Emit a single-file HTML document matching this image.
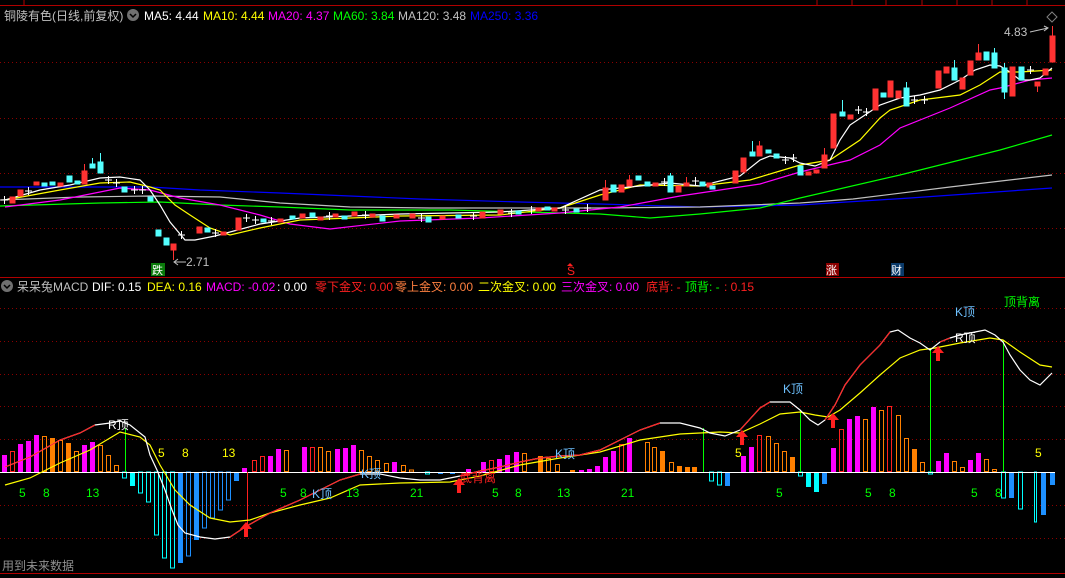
<!DOCTYPE html>
<html><head><meta charset="utf-8"><style>
html,body{margin:0;padding:0;background:#000;}
body{width:1065px;height:578px;overflow:hidden;position:relative;font-family:"Liberation Sans","Noto Sans CJK SC",sans-serif;}
svg{position:absolute;left:0;top:0;}
text{font-family:"Liberation Sans","Noto Sans CJK SC",sans-serif;}
</style></head><body>
<svg width="1065" height="578" viewBox="0 0 1065 578" xmlns="http://www.w3.org/2000/svg">
<!-- top bar -->
<line x1="0" y1="5.5" x2="1065" y2="5.5" stroke="#b00000"/>
<g stroke="#b00000"><line x1="24" y1="0" x2="24" y2="5"/><line x1="817" y1="0" x2="817" y2="5"/><line x1="852" y1="0" x2="852" y2="5"/><line x1="886" y1="0" x2="886" y2="5"/><line x1="922" y1="0" x2="922" y2="5"/><line x1="957" y1="0" x2="957" y2="5"/><line x1="992" y1="0" x2="992" y2="5"/><line x1="1027" y1="0" x2="1027" y2="5"/></g>
<!-- header -->
<g font-size="12">
<text x="4" y="20" fill="#c0c0c0">铜陵有色(日线,前复权)</text>
<circle cx="133" cy="15" r="6" fill="#707070"/><path d="M130 14 L133 17 L136 14" stroke="#000" stroke-width="1.5" fill="none"/>
<text x="144" y="20" fill="#ffffff">MA5: 4.44</text>
<text x="203" y="20" fill="#ffff00">MA10: 4.44</text>
<text x="268" y="20" fill="#ff00ff">MA20: 4.37</text>
<text x="333" y="20" fill="#00ff00">MA60: 3.84</text>
<text x="398" y="20" fill="#c0c0c0">MA120: 3.48</text>
<text x="470" y="20" fill="#0000ff">MA250: 3.36</text>
</g>
<!-- main grid -->
<g stroke="#8b0000" stroke-dasharray="1,3"><line x1="0" y1="62.5" x2="1065" y2="62.5"/><line x1="0" y1="118.5" x2="1065" y2="118.5"/><line x1="0" y1="173.5" x2="1065" y2="173.5"/><line x1="0" y1="228.5" x2="1065" y2="228.5"/></g>
<line x1="0" y1="277.5" x2="1065" y2="277.5" stroke="#b00000"/>
<!-- MA lines -->
<g fill="none" stroke-width="1.2">
<polyline stroke="#0000ff" points="0,187 150,187 200,190 280,193 350,196 420,199 520,202 600,204 700,207 800,205 910,198 1052,188"/>
<polyline stroke="#c0c0c0" points="0,200 80,197 150,196 220,197 280,203 350,207 430,208 600,208 700,207 800,203 853,199 950,187 1052,175"/>
<polyline stroke="#00ff00" points="0,206 100,203 160,202 220,205 280,207 350,210 450,210 600,214 650,218 700,214 760,208 800,198 900,175 960,160 1000,150 1052,135"/>
<polyline stroke="#ff00ff" points="5,207 60,200 120,188 150,190 180,198 220,205 260,215 290,224 330,229 400,221 480,218 560,213 620,207 680,196 720,190 760,184 800,172 850,160 880,145 900,128 950,108 990,90 1000,88 1030,80 1052,78"/>
<polyline stroke="#ffff00" points="5,200 60,190 100,183 130,182 150,187 160,190 175,205 190,215 210,228 230,235 260,228 300,220 400,216 500,215 560,208 600,195 640,185 700,186 750,180 790,168 800,165 830,160 860,140 880,118 890,110 920,100 960,95 980,85 1000,72 1020,72 1052,70"/>
<polyline stroke="#ffffff" points="5,200 40,190 70,185 100,178 120,177 140,180 150,190 160,205 170,222 185,240 195,240 215,236 230,232 260,224 300,218 400,214 500,212 560,208 600,190 640,186 670,183 700,186 740,176 760,160 770,156 790,158 800,163 815,166 830,160 840,140 850,125 865,115 880,105 900,98 920,95 940,90 960,80 975,70 990,65 1000,66 1010,72 1020,80 1030,80 1040,78 1052,68"/>
</g>
<!-- candles -->
<g id="candles">
<!-- red solid -->
<g fill="#ff3232" stroke="#ff3232">
<rect x="10" y="197" width="5" height="6"/><rect x="18" y="190" width="5" height="6"/><rect x="34" y="182" width="5" height="3"/><rect x="58" y="183" width="5" height="3"/>
<rect x="82" y="171" width="5" height="13"/><line x1="84.5" y1="164" x2="84.5" y2="171"/>
<rect x="171" y="244" width="5" height="6"/><line x1="173.5" y1="250" x2="173.5" y2="260"/>
<rect x="197" y="227" width="5" height="6"/><rect x="221" y="232" width="5" height="3"/><rect x="236" y="218" width="5" height="12"/><rect x="278" y="219" width="5" height="3"/>
<rect x="300" y="214" width="5" height="4"/><rect x="318" y="217" width="5" height="3"/><rect x="333" y="214" width="5" height="3"/><rect x="352" y="212" width="5" height="4"/><rect x="370" y="214" width="5" height="3"/><rect x="394" y="215" width="5" height="3"/><rect x="410" y="214" width="5" height="4"/><rect x="440" y="216" width="5" height="3"/><rect x="480" y="212" width="5" height="6"/><rect x="498" y="210" width="5" height="4"/><rect x="536" y="208" width="5" height="3"/><rect x="552" y="208" width="5" height="3"/>
<rect x="603" y="188" width="5" height="12"/><line x1="605.5" y1="180" x2="605.5" y2="188"/>
<rect x="619" y="185" width="5" height="7"/><rect x="627" y="180" width="5" height="6"/><line x1="629.5" y1="175" x2="629.5" y2="180"/>
<rect x="653" y="183" width="5" height="3"/><rect x="676" y="186" width="5" height="6"/><rect x="684" y="183" width="5" height="3"/><line x1="686.5" y1="177" x2="686.5" y2="183"/>
<rect x="707" y="183" width="5" height="4"/><rect x="733" y="171" width="5" height="12"/><rect x="741" y="158" width="5" height="14"/><rect x="757" y="146" width="5" height="10"/><line x1="759.5" y1="141" x2="759.5" y2="146"/>
<rect x="806" y="172" width="5" height="3"/><rect x="814" y="170" width="5" height="3"/><rect x="822" y="155" width="5" height="13"/><line x1="824.5" y1="148" x2="824.5" y2="155"/>
<rect x="831" y="114" width="5" height="34"/><rect x="848" y="115" width="5" height="4"/><rect x="873" y="89" width="5" height="21"/><rect x="888" y="81" width="5" height="16"/><rect x="896" y="91" width="5" height="7"/>
<rect x="936" y="71" width="5" height="17"/><rect x="944" y="67" width="5" height="6"/><rect x="960" y="78" width="5" height="11"/><rect x="968" y="61" width="5" height="14"/><rect x="976" y="53" width="5" height="7"/><line x1="978.5" y1="44" x2="978.5" y2="53"/>
<rect x="1010" y="67" width="5" height="29"/><rect x="1035" y="82" width="5" height="4"/><line x1="1037.5" y1="86" x2="1037.5" y2="92"/><rect x="1043" y="69" width="5" height="6"/>
<rect x="1050" y="36" width="5" height="26"/><line x1="1052.5" y1="26" x2="1052.5" y2="36"/>
</g>
<!-- cyan solid -->
<g fill="#54ffff" stroke="#54ffff">
<rect x="42" y="183" width="5" height="3"/><rect x="50" y="182" width="5" height="3"/><rect x="67" y="176" width="5" height="6"/><rect x="75" y="181" width="5" height="3"/>
<rect x="90" y="164" width="5" height="4"/><line x1="92.5" y1="158" x2="92.5" y2="164"/><rect x="98" y="162" width="5" height="11"/><line x1="100.5" y1="153" x2="100.5" y2="162"/>
<rect x="122" y="187" width="5" height="5"/><rect x="148" y="197" width="5" height="4"/><rect x="156" y="230" width="5" height="6"/><rect x="164" y="238" width="5" height="7"/><rect x="205" y="228" width="5" height="4"/><rect x="261" y="219" width="5" height="3"/>
<rect x="290" y="216" width="5" height="3"/><rect x="310" y="213" width="5" height="4"/><rect x="342" y="216" width="5" height="3"/><rect x="380" y="216" width="5" height="5"/><rect x="426" y="217" width="5" height="5"/><rect x="456" y="215" width="5" height="3"/><rect x="516" y="211" width="5" height="3"/><rect x="545" y="207" width="5" height="3"/><rect x="574" y="209" width="5" height="3"/>
<rect x="611" y="185" width="5" height="7"/><rect x="636" y="176" width="5" height="4"/><rect x="645" y="182" width="5" height="4"/><rect x="668" y="176" width="5" height="16"/><line x1="670.5" y1="173" x2="670.5" y2="176"/>
<rect x="700" y="182" width="5" height="4"/><rect x="710" y="186" width="5" height="3"/><rect x="750" y="152" width="5" height="4"/><line x1="752.5" y1="141" x2="752.5" y2="152"/><rect x="766" y="150" width="5" height="3"/><rect x="774" y="154" width="5" height="4"/><rect x="798" y="166" width="5" height="9"/>
<rect x="840" y="112" width="5" height="4"/><line x1="842.5" y1="100" x2="842.5" y2="112"/><rect x="881" y="93" width="5" height="4"/><rect x="904" y="88" width="5" height="18"/><line x1="906.5" y1="82" x2="906.5" y2="88"/>
<rect x="952" y="68" width="5" height="12"/><line x1="954.5" y1="60" x2="954.5" y2="68"/><rect x="984" y="52" width="5" height="8"/><rect x="992" y="53" width="5" height="15"/><line x1="994.5" y1="48" x2="994.5" y2="53"/>
<rect x="1002" y="68" width="5" height="24"/><line x1="1004.5" y1="63" x2="1004.5" y2="68"/><line x1="1004.5" y1="92" x2="1004.5" y2="99"/><rect x="1019" y="67" width="5" height="13"/>
</g>
<!-- crosses -->
<g stroke="#ffffff" stroke-width="1">
<path d="M1 200h7M4.5 196v8M25 191h7M28.5 187v8M105 180h7M108.5 176v8M113 183h7M116.5 179v8M131 190h7M134.5 186v8M139 190h7M142.5 186v8M178 235h7M181.5 231v8M212 233h7M215.5 229v8M243 218h7M246.5 214v8M252 220h7M255.5 216v8M268 221h7M271.5 217v8M855 110h7M858.5 106v8M863 112h7M866.5 108v8M911 100h7M914.5 96v8M921 100h7M924.5 96v8M1027 70h7M1030.5 66v8M661 182h7M664.5 178v8M692 181h7M695.5 177v8M782 160h7M785.5 156v8M790 158h7M793.5 154v8M326 216h7M329.5 212v8M362 215h7M365.5 211v8M418 218h7M421.5 214v8M470 216h7M473.5 212v8M508 213h7M511.5 209v8M528 210h7M531.5 206v8M562 210h7M565.5 206v8M584 208h7M587.5 204v8"/>
</g>
</g>
<!-- main labels -->
<g font-size="12">
<text x="1004" y="36" fill="#c0c0c0">4.83</text>
<path d="M1030 32 L1048 28 M1044 26 L1048 28 L1044 31" stroke="#c0c0c0" fill="none"/>
<path d="M1052 12 l5 5 -5 5 -5 -5z" stroke="#808080" fill="none"/>
<text x="186" y="266" fill="#c0c0c0">2.71</text>
<path d="M174 262 H186 M178 259 L174 262 L178 265" stroke="#c0c0c0" fill="none"/>
<rect x="151" y="263" width="14" height="13" fill="#0a7a0a"/><text x="152" y="274" fill="#ffffff" font-size="11">跌</text>
<text x="567" y="275" fill="#ff2020" font-size="12">S</text><path d="M567 266 l3 -3 3 3" fill="#ff2020"/>
<rect x="826" y="263" width="13" height="13" fill="#8b0000"/><text x="826" y="274" fill="#ffffff" font-size="11">涨</text>
<rect x="891" y="263" width="13" height="13" fill="#0a3a6a"/><text x="891" y="274" fill="#ffffff" font-size="11">财</text>
</g>
<!-- MACD header -->
<g font-size="12">
<circle cx="7" cy="286" r="6" fill="#707070"/><path d="M4 285 L7 288 L10 285" stroke="#000" stroke-width="1.5" fill="none"/>
<text x="17" y="291" fill="#c0c0c0">呆呆兔MACD</text>
<text x="92" y="291" fill="#ffffff">DIF: 0.15</text>
<text x="147" y="291" fill="#ffff00">DEA: 0.16</text>
<text x="206" y="291" fill="#ff00ff">MACD: -0.02</text>
<text x="277" y="291" fill="#ffffff">: 0.00</text>
<text x="315" y="291" fill="#ff2020">零下金叉: 0.00</text>
<text x="395" y="291" fill="#ff8040">零上金叉: 0.00</text>
<text x="478" y="291" fill="#ffff00">二次金叉: 0.00</text>
<text x="561" y="291" fill="#ff00ff">三次金叉: 0.00</text>
<text x="646" y="291" fill="#ff2020">底背: -</text>
<text x="685" y="291" fill="#00ff00">顶背: -</text>
<text x="724" y="291" fill="#ff2020">: 0.15</text>
</g>
<!-- MACD grid -->
<g stroke="#8b0000" stroke-dasharray="1,3"><line x1="0" y1="308.5" x2="1065" y2="308.5"/><line x1="0" y1="341.5" x2="1065" y2="341.5"/><line x1="0" y1="374.5" x2="1065" y2="374.5"/><line x1="0" y1="406.5" x2="1065" y2="406.5"/><line x1="0" y1="439.5" x2="1065" y2="439.5"/><line x1="0" y1="505.5" x2="1065" y2="505.5"/><line x1="0" y1="538.5" x2="1065" y2="538.5"/></g>
<!-- MACD bars -->
<g>
<g fill="#ff00ff">
<rect x="2" y="455" width="5" height="17"/><rect x="18" y="444" width="5" height="28"/><rect x="26" y="441" width="5" height="31"/><rect x="34" y="435" width="5" height="37"/><rect x="82" y="445" width="5" height="27"/><rect x="90" y="442" width="5" height="30"/><rect x="242" y="468" width="5" height="4"/><rect x="268" y="456" width="5" height="16"/><rect x="276" y="449" width="5" height="23"/>
<rect x="302" y="447" width="5" height="25"/><rect x="335" y="449" width="5" height="23"/><rect x="343" y="448" width="5" height="24"/><rect x="351" y="445" width="5" height="27"/><rect x="392" y="462" width="5" height="10"/><rect x="466" y="469" width="5" height="3"/>
<rect x="481" y="462" width="5" height="10"/><rect x="497" y="459" width="5" height="13"/><rect x="505" y="455" width="5" height="17"/><rect x="514" y="452" width="5" height="20"/><rect x="579" y="470" width="5" height="2"/><rect x="587" y="469" width="5" height="3"/><rect x="595" y="466" width="5" height="6"/><rect x="603" y="457" width="5" height="15"/><rect x="611" y="451" width="5" height="21"/><rect x="627" y="438" width="5" height="34"/>
<rect x="741" y="456" width="5" height="16"/><rect x="749" y="447" width="5" height="25"/><rect x="831" y="448" width="5" height="24"/><rect x="847" y="419" width="5" height="53"/><rect x="855" y="416" width="5" height="56"/><rect x="871" y="407" width="5" height="65"/><rect x="936" y="461" width="5" height="11"/><rect x="944" y="453" width="5" height="19"/><rect x="968" y="460" width="5" height="12"/><rect x="976" y="453" width="5" height="19"/>
</g>
<g fill="#ff8000">
<rect x="50" y="438" width="5" height="34"/><rect x="66" y="443" width="5" height="29"/><rect x="538" y="456" width="5" height="16"/><rect x="660" y="451" width="5" height="21"/><rect x="677" y="466" width="5" height="6"/><rect x="685" y="467" width="5" height="5"/><rect x="692" y="467" width="5" height="5"/><rect x="790" y="457" width="5" height="15"/><rect x="912" y="449" width="5" height="23"/><rect x="570" y="470" width="5" height="2"/>
</g>
<g fill="none" stroke="#ff8000">
<rect x="42.5" y="436.5" width="4" height="35"/><rect x="58.5" y="440.5" width="4" height="31"/><rect x="74.5" y="451.5" width="4" height="20"/><rect x="98.5" y="445.5" width="4" height="26"/><rect x="106.5" y="455.5" width="4" height="16"/><rect x="114.5" y="465.5" width="4" height="6"/>
<rect x="284.5" y="450.5" width="4" height="21"/><rect x="318.5" y="447.5" width="4" height="24"/><rect x="326.5" y="451.5" width="4" height="20"/><rect x="359.5" y="450.5" width="4" height="21"/><rect x="367.5" y="456.5" width="4" height="15"/><rect x="375.5" y="460.5" width="4" height="11"/><rect x="384.5" y="463.5" width="4" height="8"/><rect x="401.5" y="465.5" width="4" height="6"/><rect x="409.5" y="470" width="4" height="2"/>
<rect x="522.5" y="453.5" width="4" height="18"/><rect x="546.5" y="458.5" width="4" height="13"/><rect x="555.5" y="464.5" width="4" height="7"/><rect x="645.5" y="442.5" width="4" height="29"/><rect x="652.5" y="447.5" width="4" height="24"/><rect x="669.5" y="462.5" width="4" height="9"/>
<rect x="766.5" y="436.5" width="4" height="35"/><rect x="774.5" y="443.5" width="4" height="28"/><rect x="782.5" y="451.5" width="4" height="20"/><rect x="863.5" y="419.5" width="4" height="52"/><rect x="879.5" y="410.5" width="4" height="61"/><rect x="896.5" y="415.5" width="4" height="56"/><rect x="904.5" y="438.5" width="4" height="33"/><rect x="920.5" y="462.5" width="4" height="9"/><rect x="952.5" y="461.5" width="4" height="10"/><rect x="960.5" y="467.5" width="4" height="4"/><rect x="984.5" y="459.5" width="4" height="12"/><rect x="992.5" y="469.5" width="4" height="2"/>
</g>
<g fill="none" stroke="#ff2020">
<rect x="10.5" y="451.5" width="4" height="20"/><rect x="252.5" y="460.5" width="4" height="11"/><rect x="260.5" y="456.5" width="4" height="15"/><rect x="310.5" y="447.5" width="4" height="24"/><rect x="489.5" y="460.5" width="4" height="11"/><rect x="619.5" y="444.5" width="4" height="27"/><rect x="757.5" y="435.5" width="4" height="36"/><rect x="839.5" y="429.5" width="4" height="42"/><rect x="887.5" y="406.5" width="4" height="65"/>
</g>
<g fill="none" stroke="#00ffff">
<rect x="122.5" y="472" width="4" height="6"/><rect x="138.5" y="472" width="4" height="21"/><rect x="146.5" y="472" width="4" height="30"/><rect x="154.5" y="472" width="4" height="63"/><rect x="162.5" y="472" width="4" height="86"/><rect x="170.5" y="472" width="4" height="96"/><rect x="425.5" y="472" width="4" height="2"/>
<rect x="709.5" y="472" width="4" height="9"/><rect x="717.5" y="472" width="4" height="13"/><rect x="798.5" y="472" width="4" height="4"/><rect x="928.5" y="472" width="4" height="2"/><rect x="1001.5" y="472" width="4" height="26"/><rect x="1018.5" y="472" width="4" height="37"/><rect x="1034.5" y="472" width="2" height="50"/>
</g>
<g fill="#00ffff"><rect x="130" y="472" width="5" height="14"/><rect x="806" y="472" width="5" height="15"/><rect x="814" y="472" width="5" height="20"/></g>
<g fill="#1e90ff"><rect x="178" y="472" width="5" height="91"/><rect x="194" y="472" width="5" height="68"/><rect x="234" y="472" width="5" height="9"/><rect x="725" y="472" width="5" height="14"/><rect x="733" y="472" width="5" height="1"/><rect x="822" y="472" width="5" height="12"/><rect x="1009" y="472" width="5" height="26"/><rect x="1041" y="472" width="5" height="43"/><rect x="1050" y="472" width="5" height="13"/><rect x="438" y="472" width="5" height="2"/><rect x="450" y="472" width="5" height="2"/></g>
<g fill="none" stroke="#1e90ff"><rect x="186.5" y="472" width="4" height="84"/><rect x="202.5" y="472" width="4" height="56"/><rect x="210.5" y="472" width="4" height="46"/><rect x="218.5" y="472" width="4" height="38"/><rect x="226.5" y="472" width="4" height="28"/></g>
</g>
<!-- zero line & verticals -->
<line x1="0" y1="472.5" x2="1055" y2="472.5" stroke="#ffffff"/>
<g stroke="#00ff00"><line x1="125.5" y1="428" x2="125.5" y2="472"/><line x1="703.5" y1="428" x2="703.5" y2="472"/><line x1="800.5" y1="411" x2="800.5" y2="472"/><line x1="930.5" y1="349" x2="930.5" y2="472"/><line x1="1003.5" y1="340" x2="1003.5" y2="472"/></g>
<line x1="247.5" y1="472" x2="247.5" y2="528" stroke="#ff2020"/>
<!-- DIF / DEA -->
<polyline fill="none" stroke="#ffff00" stroke-width="1.2" points="5,485 30,478 60,463 90,450 110,438 120,432 140,437 150,445 160,465 175,490 190,505 210,518 230,522 250,520 270,513 300,505 330,498 360,485 400,483 450,482 480,476 520,465 560,458 600,452 640,440 680,434 720,432 740,433 760,424 780,414 800,412 815,415 828,417 840,410 860,393 880,375 900,358 920,350 935,348 960,343 990,338 1003,340 1020,352 1040,365 1052,367"/>
<polyline fill="none" stroke="#ffffff" stroke-width="1.2" points="5,467 30,457 60,440 80,433 95,425 110,423 120,421 130,425 145,437 150,455 157,470 165,490 172,510 178,525 185,533 200,537 215,539 230,537 245,527 270,513 300,500 320,490 340,480 360,474 380,474 400,478 420,480 440,480 460,476 480,471 500,467 520,462 540,458 560,456 580,455 600,450 620,440 640,430 660,423 680,423 700,428 710,433 725,436 740,430 760,408 770,402 790,402 800,410 810,420 818,425 825,420 835,405 845,385 860,365 870,355 880,345 890,332 898,330 910,338 920,343 930,350 940,342 950,338 960,335 975,332 985,330 995,335 1003,342 1010,355 1020,370 1030,380 1040,385 1052,373"/>
<g fill="none" stroke="#ff2020" stroke-width="1.2">
<polyline points="5,467 30,457 60,440 80,433 95,425"/>
<polyline points="230,537 245,527 270,513 300,500 320,490 340,480 360,474"/>
<polyline points="460,476 480,471 500,467 520,462 540,458 560,456 580,455 600,450 620,440 640,430 660,423"/>
<polyline points="740,430 760,408 770,402"/>
<polyline points="825,420 835,405 845,385 860,365 870,355 880,345 890,332"/>
<polyline points="940,342 950,338"/>
</g>
<!-- arrows -->
<g fill="#ff2020">
<path d="M246 522 l-6 7 h4 v8 h4 v-8 h4z"/><path d="M459 478 l-6 7 h4 v8 h4 v-8 h4z"/><path d="M742 430 l-6 7 h4 v8 h4 v-8 h4z"/><path d="M833 413 l-6 7 h4 v8 h4 v-8 h4z"/><path d="M938 346 l-6 7 h4 v8 h4 v-8 h4z"/>
</g>
<!-- MACD labels -->
<g font-size="12">
<text x="108" y="429" fill="#ffffff">R顶</text>
<text x="158" y="457" fill="#ffff00">5</text><text x="182" y="457" fill="#ffff00">8</text><text x="222" y="457" fill="#ffff00">13</text>
<text x="735" y="457" fill="#ffff00">5</text><text x="1035" y="457" fill="#ffff00">5</text>
<g fill="#00ff00">
<text x="19" y="497">5</text><text x="43" y="497">8</text><text x="86" y="497">13</text><text x="280" y="497">5</text><text x="300" y="497">8</text><text x="346" y="497">13</text><text x="410" y="497">21</text><text x="492" y="497">5</text><text x="515" y="497">8</text><text x="557" y="497">13</text><text x="621" y="497">21</text><text x="776" y="497">5</text><text x="865" y="497">5</text><text x="889" y="497">8</text><text x="971" y="497">5</text><text x="995" y="497">8</text>
</g>
<g fill="#6ec1ff"><text x="312" y="498">K顶</text><text x="361" y="478">K顶</text><text x="783" y="393">K顶</text><text x="955" y="316">K顶</text><text x="555" y="458">K顶</text></g>
<text x="955" y="342" fill="#ffffff">R顶</text>
<text x="460" y="482" fill="#ff2020">底背离</text>
<text x="1004" y="306" fill="#00ff00">顶背离</text>
<text x="2" y="570" fill="#909090">用到未来数据</text>
</g>
<line x1="0" y1="573.5" x2="1065" y2="573.5" stroke="#b00000"/>
</svg>
</body></html>
